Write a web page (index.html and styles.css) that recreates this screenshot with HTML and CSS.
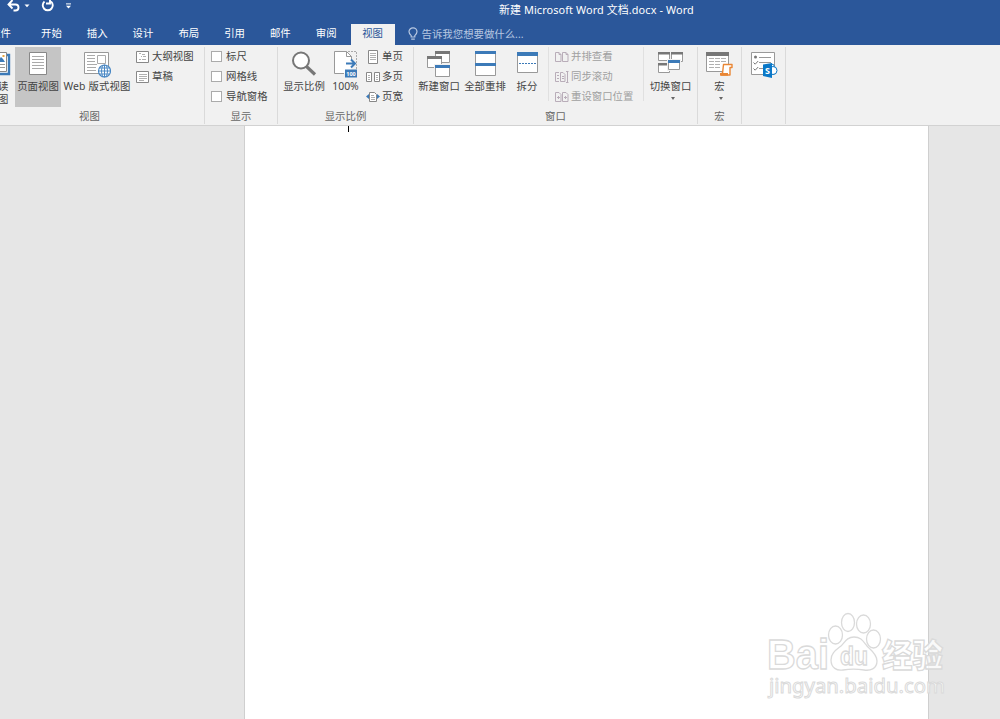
FILE: index.html
```html
<!DOCTYPE html>
<html lang="zh-CN">

<head>
    <meta charset="utf-8">
    <title>新建 Microsoft Word 文档.docx - Word</title>
    <link rel="stylesheet" href="styles.css">
</head>

<body>
    <header class="titlebar">
        <div class="quick-access">
            <svg width="80" height="16" viewBox="0 0 80 16" fill="none">
                <path d="M9 4.500h6.500a3 3 0 0 1 0 6h-2M12.500 0l-4 4.500 4 4" stroke="#fff" stroke-width="1.900" />
                <path d="M24.500 4.500h5l-2.500 2.700z" fill="#fff" />
                <path d="M44.500 1.500a5 5 0 1 0 6.500 0M50 -1v4.500h-4" stroke="#fff" stroke-width="1.900" />
                <path d="M66 3.900h5" stroke="#fff" />
                <path d="M66 5.800h5l-2.500 2.700z" fill="#fff" />
            </svg>
        </div>
        <div class="title">新建 Microsoft Word 文档.docx - Word</div>
    </header>

    <nav class="tabs">
        <a class="tab file">文件</a>
        <a class="tab">开始</a>
        <a class="tab">插入</a>
        <a class="tab">设计</a>
        <a class="tab">布局</a>
        <a class="tab">引用</a>
        <a class="tab">邮件</a>
        <a class="tab">审阅</a>
        <a class="tab active">视图</a>
        <div class="tell-me">
            <svg width="10" height="14" viewBox="0 0 10 14" fill="none" stroke="#b8c8e2">
                <path d="M3.200 10V8.600C2 7.500 1 6.500 1 4.800a4 4 0 0 1 8 0c0 1.700-1 2.700-2.200 3.800V10zM3.200 12.200h3.600" stroke-width="1.200" />
            </svg>
            <span>告诉我您想要做什么...</span>
        </div>
    </nav>

    <div class="ribbon">
        <section class="group views">
            <div class="tools">
                <div class="big read">
                    <svg width="26" height="28" viewBox="0 0 26 28">
                        <path d="M1 5h23v19H1z" fill="#fff" stroke="#3c7ab8" stroke-width="2.400" />
                        <path d="M10 2.500h11.500v19H10z" fill="#fff" stroke="#888" />
                        <path d="M12 12l4-5 2 2 2 3z" fill="#3c7ab8" />
                        <path d="M17.500 5h2v2h-2z" fill="#e8a33d" />
                        <path d="M12 14.500h8M12 17.500h8" stroke="#999" />
                    </svg>
                    <span>阅读<br>视图</span>
                </div>
                <div class="big page selected">
                    <svg width="26" height="28" viewBox="0 0 26 28">
                        <path d="M4.500 2.500h17v22h-17z" fill="#fff" stroke="#888" />
                        <path d="M7 6.500h12M7 9.500h12M7 12.500h12M7 15.500h12M7 18.500h12" stroke="#aaa" />
                    </svg>
                    <span>页面视图</span>
                </div>
                <div class="big web">
                    <svg width="28" height="28" viewBox="0 0 28 28">
                        <path d="M1.500 2.500h24v21h-24z" fill="#fff" stroke="#999" />
                        <path d="M4 5.500h8M4 8.500h8M4 11.500h8M4 14.500h10M4 17.500h9M4 20.500h9" stroke="#aaa" />
                        <path d="M14.500 5.500h8v8h-8z" fill="#fff" stroke="#aaa" />
                        <circle cx="21.500" cy="21" r="6" fill="#fff" stroke="#4a88c4" stroke-width="1.200" />
                        <path d="M15.500 21h12M21.500 15v12M17 18h9M17 24h9" stroke="#4a88c4" fill="none" />
                        <ellipse cx="21.500" cy="21" rx="3" ry="6" stroke="#4a88c4" fill="none" />
                    </svg>
                    <span>Web 版式视图</span>
                </div>
                <div class="stack">
                    <div class="small">
                        <svg width="14" height="12" viewBox="0 0 14 12">
                            <path d="M.5.500h12v11H.5z" fill="#fff" stroke="#888" />
                            <path d="M3 2.500h2M6 3.500h3M5 5.500h1M7 5.500h3M3 8.500h2M6 8.500h4" stroke="#b0b0b0" />
                        </svg>
                        <span>大纲视图</span>
                    </div>
                    <div class="small">
                        <svg width="14" height="12" viewBox="0 0 14 12">
                            <path d="M.5.500h12v11H.5z" fill="#fff" stroke="#888" />
                            <path d="M3 3.500h8M3 5.500h8M3 7.500h8M3 9.500h5" stroke="#b0b0b0" />
                        </svg>
                        <span>草稿</span>
                    </div>
                </div>
            </div>
            <div class="group-name">视图</div>
        </section>

        <section class="group show">
            <div class="tools">
                <div class="stack">
                    <div class="small"><i class="checkbox"></i><span>标尺</span></div>
                    <div class="small"><i class="checkbox"></i><span>网格线</span></div>
                    <div class="small"><i class="checkbox"></i><span>导航窗格</span></div>
                </div>
            </div>
            <div class="group-name">显示</div>
        </section>

        <section class="group zoom">
            <div class="tools">
                <div class="big ratio">
                    <svg width="26" height="28" viewBox="0 0 26 28">
                        <path d="M15.500 16.500l8.500 8" stroke="#777" stroke-width="3.200" />
                        <circle cx="10" cy="10.500" r="8" fill="#fff" stroke="#777" stroke-width="2" />
                    </svg>
                    <span>显示比例</span>
                </div>
                <div class="big hundred">
                    <svg width="24" height="28" viewBox="0 0 24 28">
                        <path d="M.5 1.500h12l5 5v17H.5z" fill="#fff" />
                        <path d="M10 23.500H.5v-22h12v5h5v4M12.500 1.500l5 5" fill="none" stroke="#999" />
                        <path d="M14 1.500h8.500v18" fill="none" stroke="#aaa" stroke-dasharray="2 1" />
                        <path d="M12 13.500h9M17 9.500l4 4-4 4" fill="none" stroke="#3c7ab8" stroke-width="2" />
                        <path d="M11 19.500h12v8H11z" fill="#3c7ab8" />
                        <text class="badge" x="17" y="25.500">100</text>
                    </svg>
                    <span>100%</span>
                </div>
                <div class="stack">
                    <div class="small">
                        <svg width="14" height="14" viewBox="0 0 14 14">
                            <path d="M2.500.500h9v13h-9z" fill="#fff" stroke="#888" />
                            <path d="M4 3.500h6M4 5.500h6M4 7.500h6M4 9.500h6" stroke="#b0b0b0" />
                        </svg>
                        <span>单页</span>
                    </div>
                    <div class="small">
                        <svg width="14" height="12" viewBox="0 0 14 12">
                            <path d="M.5 1.500h5v9h-5zM8.500 1.500h5v9h-5z" fill="#fff" stroke="#888" />
                            <path d="M2 4.500h2M2 6.500h2M2 8.500h2M10 4.500h2M10 6.500h2M10 8.500h2" stroke="#b0b0b0" />
                        </svg>
                        <span>多页</span>
                    </div>
                    <div class="small">
                        <svg width="14" height="12" viewBox="0 0 14 12">
                            <path d="M3.500 1.500h5l2 2v7h-7z" fill="#fff" stroke="#888" />
                            <path d="M5 4.500h3M5 6.500h4M5 8.500h4" stroke="#b0b0b0" />
                            <path d="M3 3v5L0 5.500zM11 3v5l3-2.500z" fill="#3c7ab8" />
                        </svg>
                        <span>页宽</span>
                    </div>
                </div>
            </div>
            <div class="group-name">显示比例</div>
        </section>

        <section class="group window">
            <div class="tools">
                <div class="big new-window">
                    <svg width="26" height="28" viewBox="0 0 26 28">
                        <path d="M9.500 1.500h14v11h-14z" fill="#fff" stroke="#999" /><path d="M9 1h15v3H9z" fill="#777" />
                        <path d="M1.500 6.500h14v11h-14z" fill="#fff" stroke="#999" /><path d="M1 6h15v3H1z" fill="#777" />
                        <path d="M8 14h17v14H8z" fill="#f1f1f1" />
                        <path d="M9.500 15.500h14v11h-14z" fill="#fff" stroke="#999" /><path d="M9 15h15v3H9z" fill="#3c7ab8" />
                    </svg>
                    <span>新建窗口</span>
                </div>
                <div class="big arrange">
                    <svg width="21" height="28" viewBox="0 0 21 28">
                        <path d="M.5 1.500h20v24H.5z" fill="#fff" stroke="#999" />
                        <path d="M0 1h21v3H0zM0 13h21v3H0z" fill="#3c7ab8" />
                    </svg>
                    <span>全部重排</span>
                </div>
                <div class="big split">
                    <svg width="21" height="28" viewBox="0 0 21 28">
                        <path d="M.5 2.500h20v20H.5z" fill="#fff" stroke="#999" />
                        <path d="M0 2h21v4H0z" fill="#3c7ab8" />
                        <path d="M2 13.500h17" stroke="#3c7ab8" stroke-dasharray="2 1" />
                    </svg>
                    <span>拆分</span>
                </div>
                <div class="stack disabled">
                    <div class="small">
                        <svg width="14" height="12" viewBox="0 0 14 12" fill="none" stroke="#b9adb9">
                            <path d="M.5 1.500h3.500l2 2v7H.5zM7.500 1.500H11l2 2v7H7.500zM4 1.500v2h2M11 1.500v2h2" />
                        </svg>
                        <span>并排查看</span>
                    </div>
                    <div class="small">
                        <svg width="14" height="12" viewBox="0 0 14 12" fill="none" stroke="#b9adb9">
                            <path d="M4 1.500H.5v9H4M5.500 1.500H8l2 2v7H5.500zM2 4.500h2M2 7.500h2M7 5.500h2M7 7.500h2M11 .5h2.500M12.500.500v11M11 11.500h2.500" />
                        </svg>
                        <span>同步滚动</span>
                    </div>
                    <div class="small">
                        <svg width="14" height="12" viewBox="0 0 14 12" fill="none" stroke="#b9adb9">
                            <path d="M.5 1.500H4l2 2v7H.5zM7.500 1.500H11l2 2v7H7.500zM2 6.500h3M3.500 5v3M9 6.500h3M10.500 5v3" />
                        </svg>
                        <span>重设窗口位置</span>
                    </div>
                </div>
                <div class="big switch">
                    <svg width="26" height="28" viewBox="0 0 26 28">
                        <path d="M.5 2.500h11v8H.5zM13.500 2.500h11v9h-11zM.5 13.500h11v9H.5z" fill="#fff" stroke="#999" />
                        <path d="M0 2h12v2.500H0zM13 2h12v2.500H13zM0 13h12v2.500H0z" fill="#777" />
                        <path d="M9 9h14v12H9z" fill="#f1f1f1" />
                        <path d="M10.500 10.500h11v9h-11z" fill="#fff" stroke="#999" /><path d="M10 10h12v3H10z" fill="#3c7ab8" />
                    </svg>
                    <span>切换窗口</span>
                    <i class="arrow"></i>
                </div>
            </div>
            <div class="group-name">窗口</div>
        </section>

        <section class="group macro">
            <div class="tools">
                <div class="big">
                    <svg width="28" height="28" viewBox="0 0 28 28">
                        <path d="M.5 2.500h22v19H.5z" fill="#fff" stroke="#999" />
                        <path d="M0 2h23v4H0z" fill="#777" />
                        <path d="M3 8.500h5M9 8.500h5M15 8.500h5M3 11.500h5M9 11.500h5M15 11.500h5M3 14.500h5M9 14.500h5M3 17.500h5M9 17.500h5" stroke="#b0b0b0" />
                        <path d="M17.500 14.500h8.500v3h-2V25h-8.500v-1.500h1z" fill="#fff" stroke="#e98634" stroke-width="1.400" stroke-linejoin="round" />
                        <path d="M14 23h8v2.700h-8z" fill="#e98634" />
                    </svg>
                    <span>宏</span>
                    <i class="arrow"></i>
                </div>
            </div>
            <div class="group-name">宏</div>
        </section>

        <section class="group skype">
            <div class="tools">
                <div class="big">
                    <svg width="28" height="28" viewBox="0 0 28 28">
                        <path d="M1.500 2.500h23v22h-23z" fill="#fff" stroke="#999" />
                        <path d="M9 7.500h12M9 12.500h12M9 18.500h4" stroke="#999" />
                        <circle cx="5.500" cy="7" r="1.500" fill="#777" />
                        <path d="M3.500 12.500l1.700 1.700 3-3.200M3.500 18.500l1.700 1.700 3-3.200" fill="none" stroke="#777" />
                        <circle cx="21.500" cy="17" r="3" fill="#fff" stroke="#0a78c8" />
                        <circle cx="23" cy="20.500" r="4" fill="#fff" stroke="#0a78c8" />
                        <path d="M13 14.500l9-1.500v15l-9-2z" fill="#0a78c8" />
                        <text class="skype-letter" x="17.500" y="23.500">S</text>
                    </svg>
                </div>
            </div>
        </section>
    </div>

    <main class="workspace">
        <div class="paper"><i class="caret"></i></div>
        <svg class="watermark" width="190" height="100" viewBox="0 0 190 100">
            <g class="paw">
                <ellipse cx="90.500" cy="28" rx="7" ry="9" />
                <ellipse cx="103" cy="15.500" rx="6.500" ry="9" />
                <ellipse cx="118.500" cy="17" rx="7" ry="9" />
                <ellipse cx="128.500" cy="32" rx="7" ry="9" />
                <path d="M109 30c-7 0-9 5-13 9-5 4-10 7-10 14 0 8 6 11 12 10 6-1 15-1 21 0s13-1 13-9c0-7-6-11-10-15-4-5-6-9-13-9z" />
            </g>
            <text class="brand" x="22" y="62" textLength="62" lengthAdjust="spacingAndGlyphs">Bai</text>
            <text class="du" x="95" y="58" textLength="28" lengthAdjust="spacingAndGlyphs">du</text>
            <text class="brand-cn" x="137" y="60" textLength="61" lengthAdjust="spacingAndGlyphs">经验</text>
            <text class="site" x="24" y="86" textLength="176" lengthAdjust="spacingAndGlyphs">jingyan.baidu.com</text>
        </svg>
    </main>
</body>

</html>
```
FILE: styles.css
```css
* {
    box-sizing: border-box;
}

body {
    margin: 0;
    height: 719px;
    overflow: hidden;
    display: flex;
    flex-direction: column;
    background: #e6e6e6;
    color: #444;
    font-family: "Noto Sans", "Noto Sans CJK SC", sans-serif;
    font-size: 10.4px;
    white-space: nowrap;
}

svg {
    display: block;
    flex: none;
}

.titlebar {
    height: 24px;
    display: flex;
    background: #2b579a;
    color: #fff;
}

.quick-access {
    width: 499px;
}

.title {
    font-size: 10.9px;
    letter-spacing: 0.1px;
    line-height: 20px;
}

.tabs {
    height: 21px;
    display: flex;
    background: #2b579a;
    color: #fff;
}

.tab {
    width: 45.8px;
    flex: none;
    line-height: 19px;
    text-align: center;
}

.tab.file {
    width: 56px;
    margin-left: -27.500px;
}

.tab.active {
    width: 44px;
    margin-left: 1.500px;
    background: #f1f1f1;
    color: #2b579a;
}

.tell-me {
    display: flex;
    align-items: center;
    gap: 4px;
    margin-left: 13px;
    height: 19px;
    color: #b8c8e2;
}

.ribbon {
    height: 81px;
    flex: none;
    display: flex;
    background: #f1f1f1;
    border-bottom: 1px solid #d2d2d2;
}

.group {
    height: 77px;
    margin-top: 2px;
    border-right: 1px solid #dadada;
    display: flex;
    flex-direction: column;
}

.tools {
    height: 61px;
    display: flex;
}

.group-name {
    line-height: 19px;
    text-align: center;
    color: #666;
}

.big {
    height: 60px;
    flex: none;
    padding-top: 3px;
    display: flex;
    flex-direction: column;
    align-items: center;
}

.big span {
    line-height: 13px;
    margin-top: 2px;
    text-align: center;
}

.selected {
    background: #c5c5c5;
}

.stack {
    display: flex;
    flex-direction: column;
}

.small {
    height: 20px;
    line-height: 18px;
    display: flex;
    align-items: center;
    gap: 2px;
}

.small span {
    height: 20px;
}

.checkbox {
    width: 11px;
    height: 11px;
    margin-bottom: 1px;
    background: #fff;
    border: 1px solid #ababab;
}

.arrow {
    margin: 4px 0 0 4px;
    border: 2.500px solid transparent;
    border-top: 3px solid #666;
    border-bottom: 0;
}

.macro .arrow {
    margin-left: 2px;
}

.disabled {
    color: #a0a0a0;
}

.views {
    width: 205px;
}

.views .group-name {
    padding-right: 25px;
}

.read {
    width: 30px;
    margin-left: -17px;
}

.page {
    width: 46px;
    margin-left: 2px;
}

.web {
    width: 72px;
}

.web span {
    letter-spacing: 0.15px;
}

.views .stack {
    margin-left: 3px;
}

.show {
    width: 73px;
}

.show .stack {
    margin-left: 6px;
}

.show .small {
    gap: 4px;
}

.zoom {
    width: 136px;
}

.ratio {
    width: 50px;
    margin-left: 1px;
}

.hundred {
    width: 33px;
}

.zoom .stack {
    margin-left: 4px;
}

.window {
    width: 284px;
}

.new-window {
    width: 46px;
    margin-left: 2px;
}

.arrange {
    width: 46px;
}

.split {
    width: 38px;
}

.window .stack {
    width: 96px;
    height: 54px;
    margin-left: 2px;
    padding-left: 6px;
    border-left: 1px solid #e0e0e0;
    border-right: 1px solid #e0e0e0;
}

.window .small {
    flex: none;
}

.switch {
    width: 53px;
}

.macro .big,
.skype .big {
    width: 43px;
}

.macro,
.skype {
    width: 44px;
}

.badge {
    fill: #fff;
    font: bold 5.500px "Noto Sans", sans-serif;
    text-anchor: middle;
}

.skype-letter {
    fill: #fff;
    font: bold 9px "Noto Sans", sans-serif;
    text-anchor: middle;
}

.workspace {
    flex: 1;
    position: relative;
}

.paper {
    width: 685px;
    height: 100%;
    margin-left: 244px;
    background: #fff;
    border: solid #cfcfcf;
    border-width: 0 1px;
}

.caret {
    display: block;
    width: 1px;
    height: 6px;
    margin-left: 103px;
    background: #000;
}

/* sits across the page edge */
.watermark {
    position: absolute;
    left: 745px;
    top: 481px;
    overflow: visible;
    fill: rgba(255, 255, 255, 0.8);
    stroke: #dadada;
    stroke-width: 1.3px;
}

.brand {
    font: bold 42px "Liberation Sans", sans-serif;
}

.brand-cn {
    font: 900 32px "Noto Sans CJK SC", sans-serif;
}

.du {
    font: bold 25px "Liberation Sans", sans-serif;
}

.site {
    font: 20px "Noto Sans", sans-serif;
    stroke-width: 1px;
}
```
